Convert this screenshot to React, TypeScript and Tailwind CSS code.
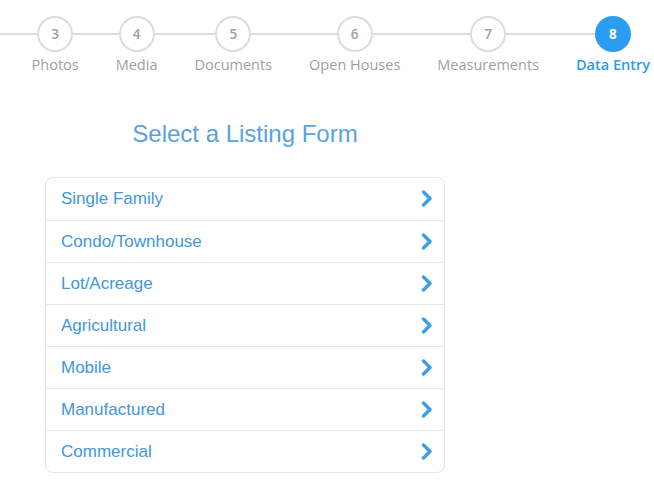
const steps = [
  { n: 3, label: "Photos" },
  { n: 4, label: "Media" },
  { n: 5, label: "Documents" },
  { n: 6, label: "Open Houses" },
  { n: 7, label: "Measurements" },
  { n: 8, label: "Data Entry", active: true },
];

const forms = [
  "Single Family",
  "Condo/Townhouse",
  "Lot/Acreage",
  "Agricultural",
  "Mobile",
  "Manufactured",
  "Commercial",
];

function Chevron() {
  return (
    <svg width="12" height="17" viewBox="0 0 12 17" fill="none" className="shrink-0">
      <polyline
        points="2.5,2 9,8.5 2.5,15"
        stroke="#3ca0e8"
        strokeWidth="3.4"
        strokeLinecap="round"
        strokeLinejoin="round"
      />
    </svg>
  );
}

export default function App() {
  return (
    <div className="w-[654px] h-[487px] bg-white overflow-hidden font-['Open_Sans',sans-serif]">
      {/* Stepper */}
      <div className="relative flex justify-end gap-[37px] pr-[4px] pt-[16px]">
        <div className="absolute left-0 right-[42px] top-[33px] h-[2px] bg-[#dcdcdc]" />
        {steps.map((s) => (
          <div key={s.n} className="relative flex flex-col items-center shrink-0">
            <div
              className={
                s.active
                  ? "w-[36px] h-[36px] rounded-full bg-[#2a9df0] text-white flex items-center justify-center text-[13.5px] font-bold"
                  : "w-[36px] h-[36px] rounded-full bg-white border-2 border-[#dcdcdc] text-[#a0a0a0] flex items-center justify-center text-[13.5px] font-semibold"
              }
            >
              {s.n}
            </div>
            <div
              className={
                s.active
                  ? "mt-[2px] text-[14.5px] font-semibold text-[#2a9df0] whitespace-nowrap"
                  : "mt-[2px] text-[14.5px] text-[#a0a0a0] whitespace-nowrap"
              }
            >
              {s.label}
            </div>
          </div>
        ))}
      </div>

      {/* Form picker */}
      <div className="ml-[45px] w-[400px] mt-[43px] font-['Liberation_Sans',Arial,sans-serif]">
        <h2 className="text-center text-[24px] leading-[30px] text-[#5aa2dc]">Select a Listing Form</h2>
        <div className="mt-[28px] border border-[#e6e6e6] rounded-[8px]">
          {forms.map((f, i) => (
            <div
              key={f}
              className={
                i === 0
                  ? "h-[42px] flex items-center justify-between pl-[15px] pr-[11px]"
                  : "h-[42px] flex items-center justify-between pl-[15px] pr-[11px] border-t border-[#e6e6e6]"
              }
            >
              <span className="text-[17px] text-[#3f97dc]">{f}</span>
              <Chevron />
            </div>
          ))}
        </div>
      </div>
    </div>
  );
}
